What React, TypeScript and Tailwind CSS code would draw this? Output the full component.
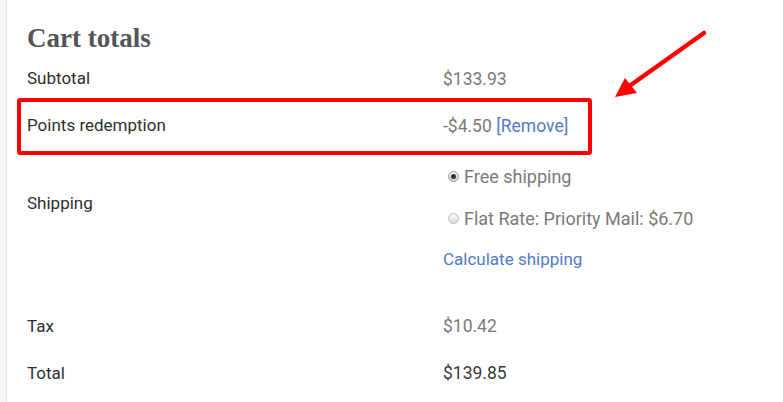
import React from 'react';

const label = 'w-[416px] shrink-0 text-[17px] font-normal text-[#2f2f2f]';
const value = 'text-[17.5px] text-[#7a7a7a]';

const Radio = ({ checked }: { checked: boolean }) => (
  <span
    className={
      checked
        ? 'mr-[5px] flex h-[11px] w-[11px] items-center justify-center rounded-full border border-[#9a9a9a] bg-gradient-to-b from-[#f4f4f4] to-[#cfcfcf]'
        : 'mr-[5px] h-[11px] w-[11px] rounded-full border border-[#b8b8b8] bg-gradient-to-b from-[#fafafa] to-[#d9d9d9]'
    }
  >
    {checked && <span className="h-[5px] w-[5px] rounded-full bg-[#333]" />}
  </span>
);

export default function App() {
  return (
    <div className="relative flex h-[402px] w-[783px] overflow-hidden bg-white font-['Roboto',sans-serif]">
      {/* page gutter */}
      <div className="w-[7px] shrink-0 border-r border-[#e4e4e4] bg-[#f6f6f6]" />

      <div className="flex flex-1 flex-col pl-[20px] pt-[20px]">
        <h2 className="h-[36px] font-['Liberation_Serif',serif] text-[27px] font-bold leading-[36px] text-[#555]">
          Cart totals
        </h2>

        <div className="flex h-[46px] items-center">
          <div className={label}>Subtotal</div>
          <div className={value}>$133.93</div>
        </div>

        <div className="flex h-[48px] items-center">
          <div className={label}>Points redemption</div>
          <div className={value}>
            -$4.50 <a className="text-[#4f7bc8]">[Remove]</a>
          </div>
        </div>

        <div className="flex h-[153px] items-start">
          <div className={`${label} pt-[41px] leading-[24px]`}>Shipping</div>
          <div className="flex flex-col pt-[14px]">
            <div className={`${value} flex h-[24px] items-center pl-[5px] text-[18px]`}>
              <Radio checked />
              Free shipping
            </div>
            <div className={`${value} mt-[18px] flex h-[24px] items-center pl-[5px] text-[18px]`}>
              <Radio checked={false} />
              Flat Rate: Priority Mail: $6.70
            </div>
            <a className="mt-[17px] h-[24px] text-[17px] leading-[24px] text-[#4f7bc8]">
              Calculate shipping
            </a>
          </div>
        </div>

        <div className="flex h-[47px] items-center">
          <div className={label}>Tax</div>
          <div className={value}>$10.42</div>
        </div>

        <div className="flex h-[47px] items-center">
          <div className={label}>Total</div>
          <div className="text-[17.5px] text-[#3a3a3a]">$139.85</div>
        </div>
      </div>

      {/* annotation */}
      <div className="absolute left-[17px] top-[98px] h-[57px] w-[575px] rounded-[3px] border-[4px] border-[#ff0000]" />
      <svg className="absolute left-0 top-0" width="783" height="402" viewBox="0 0 783 402">
        <line x1="704" y1="33" x2="628" y2="87" stroke="#ff0000" strokeWidth="4.5" strokeLinecap="round" />
        <polygon points="615,97 625,78 637,93" fill="#ff0000" />
      </svg>
    </div>
  );
}
